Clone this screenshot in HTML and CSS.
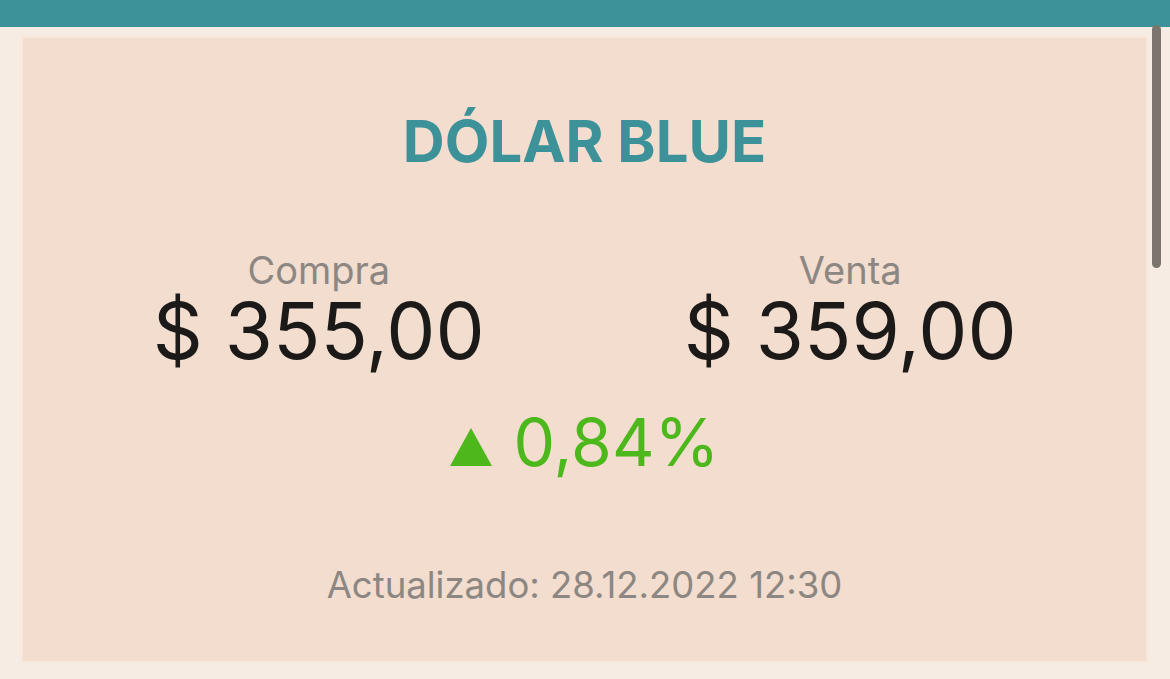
FILE: index.html
```html
<!DOCTYPE html>
<html>
<head>
  <meta charset="utf-8">
  <title>Dólar Blue</title>
  <link rel="stylesheet" href="styles.css">
</head>
<body>
  <div class="topbar"></div>
  <main class="page">
    <section class="card">
      <h1 class="title">DÓLAR BLUE</h1>
      <div class="prices">
        <div class="price">
          <span class="label">Compra</span>
          <span class="value">$ 355,00</span>
        </div>
        <div class="price">
          <span class="label">Venta</span>
          <span class="value">$ 359,00</span>
        </div>
      </div>
      <p class="change">
        <svg class="arrow" viewBox="0 0 42 38" width="42" height="38"><polygon points="21,0 42,38 0,38" fill="currentColor"/></svg>
        <span>0,84%</span>
      </p>
      <p class="updated">Actualizado: 28.12.2022 12:30</p>
    </section>
  </main>
  <div class="scrollbar"></div>
</body>
</html>
```

FILE: styles.css
```css
body {
  margin: 0;
  background-color: #f6ece3;
  font-family: Inter, "Noto Sans", sans-serif;
  height: 679px;
  overflow: hidden;
}

.topbar {
  height: 27px;
  background-color: #3d9299;
}

.page {
  padding: 9px 22px 0 21px;
}

.card {
  background-color: #f2ddcf;
  border: 2px solid #f8e8dc;
  display: flex;
  flex-direction: column;
  align-items: center;
  box-sizing: border-box;
  height: 627px;
}

.title {
  margin: 74px 0 0;
  font-size: 58px;
  line-height: 1;
  font-weight: 700;
  color: #3d9299;
}

.prices {
  margin-top: 80px;
  display: grid;
  grid-template-columns: 1fr 1fr;
  width: 100%;
  padding: 0 30px;
  box-sizing: border-box;
}

.price {
  display: flex;
  flex-direction: column;
  align-items: center;
}

.label {
  font-size: 38px;
  line-height: 1.1;
  color: #8c8782;
}

.value {
  font-size: 78px;
  line-height: 1;
  color: #1b1a19;
}

.change {
  margin: 39px 0 0;
  display: flex;
  align-items: baseline;
  gap: 22px;
  font-size: 66px;
  line-height: 1;
  color: #4cb81c;
}

.arrow {
  display: block;
}

.updated {
  margin: 92px 0 0;
  font-size: 36.5px;
  line-height: 1;
  color: #8c8782;
}

.scrollbar {
  position: absolute;
  top: 25px;
  left: 1152px;
  width: 9px;
  height: 243px;
  border-radius: 5px;
  background-color: #7b756d;
}
```
